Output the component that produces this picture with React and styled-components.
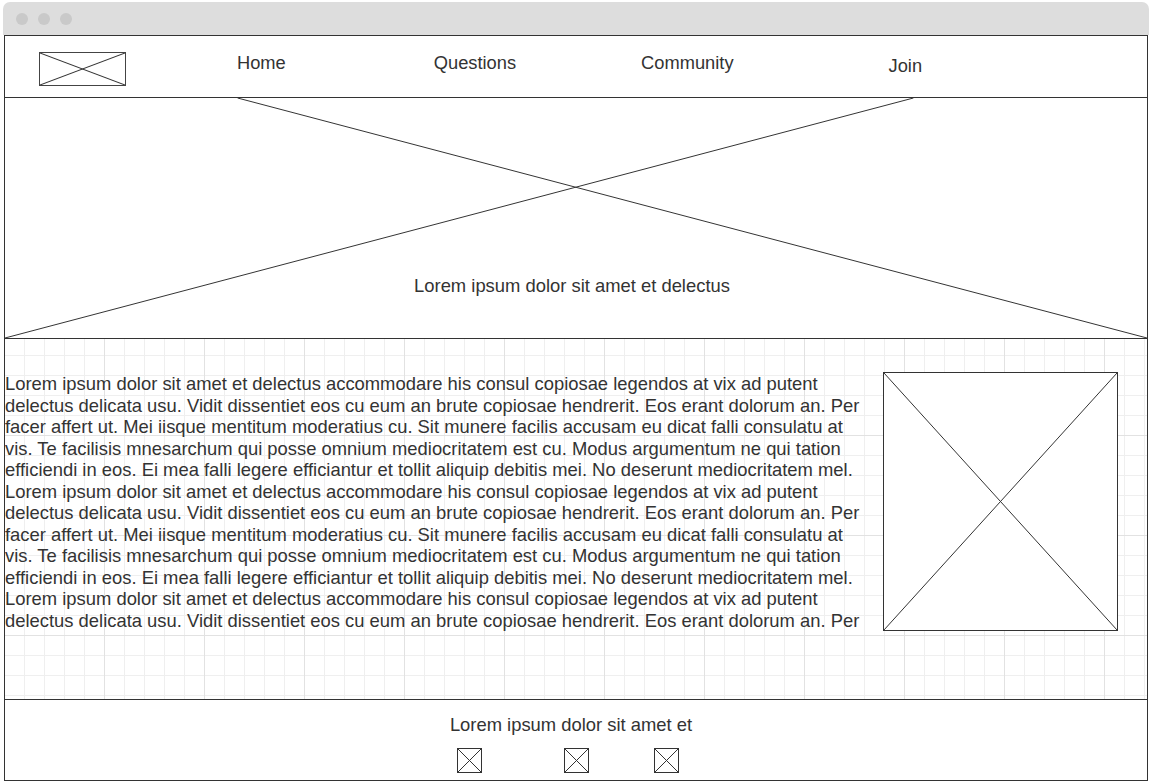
import React from "react";
import styled, { createGlobalStyle } from "styled-components";

const GlobalStyle = createGlobalStyle`
  html, body {
    margin: 0;
    padding: 0;
    background: #ffffff;
  }
  body {
    font-family: "Liberation Sans", Arial, sans-serif;
    color: #333333;
  }
`;

const paragraph = [
  "Lorem ipsum dolor sit amet et delectus accommodare his consul copiosae legendos at vix ad putent",
  "delectus delicata usu. Vidit dissentiet eos cu eum an brute copiosae hendrerit. Eos erant dolorum an. Per",
  "facer affert ut. Mei iisque mentitum moderatius cu. Sit munere facilis accusam eu dicat falli consulatu at",
  "vis. Te facilisis mnesarchum qui posse omnium mediocritatem est cu. Modus argumentum ne qui tation",
  "efficiendi in eos. Ei mea falli legere efficiantur et tollit aliquip debitis mei. No deserunt mediocritatem mel.",
];

const lines = [...paragraph, ...paragraph, paragraph[0], paragraph[1]];

const navItems = [
  { label: "Home", left: 111, drop: 0 },
  { label: "Questions", left: 148, drop: 0 },
  { label: "Community", left: 125, drop: 0 },
  { label: "Join", left: 155, drop: 5 },
];

const footerIcons = [0, 82, 65];

const Placeholder = () => (
  <svg width="100%" height="100%" preserveAspectRatio="none" viewBox="0 0 100 100">
    <line x1="0" y1="0" x2="100" y2="100" stroke="#333" strokeWidth="1" vectorEffect="non-scaling-stroke" />
    <line x1="100" y1="0" x2="0" y2="100" stroke="#333" strokeWidth="1" vectorEffect="non-scaling-stroke" />
  </svg>
);

const App = () => {
  return (
    <>
      <GlobalStyle />
      <Window>
        <TitleBar>
          <Dot />
          <Dot />
          <Dot />
        </TitleBar>
        <Frame>
          <Header>
            <Logo>
              <Placeholder />
            </Logo>
            <Nav>
              {navItems.map((item) => (
                <NavItem key={item.label} $left={item.left} $drop={item.drop}>
                  {item.label}
                </NavItem>
              ))}
            </Nav>
          </Header>
          <Hero>
            <HeroLines viewBox="0 0 1144 241" preserveAspectRatio="none">
              <line x1="233" y1="0" x2="1144" y2="241" stroke="#333" strokeWidth="1" />
              <line x1="910" y1="0" x2="0" y2="241" stroke="#333" strokeWidth="1" />
            </HeroLines>
            <HeroText>Lorem ipsum dolor sit amet et delectus</HeroText>
          </Hero>
          <Main>
            <Article>
              {lines.map((line, i) => (
                <Line key={i}>{line}</Line>
              ))}
            </Article>
            <ImageBox>
              <Placeholder />
            </ImageBox>
          </Main>
          <Footer>
            <FooterText>Lorem ipsum dolor sit amet et</FooterText>
            <IconRow>
              {footerIcons.map((gap, i) => (
                <SmallIcon key={i} $gap={gap}>
                  <Placeholder />
                </SmallIcon>
              ))}
            </IconRow>
          </Footer>
        </Frame>
      </Window>
    </>
  );
};

export default App;

const Window = styled.div`
  width: 1146px;
  margin: 2px 0 0 3px;
`;

const TitleBar = styled.div`
  height: 33px;
  background: #dddddd;
  border-radius: 7px 7px 0 0;
  display: flex;
  align-items: center;
  gap: 10px;
  padding-left: 13px;
  box-sizing: border-box;
`;

const Dot = styled.span`
  width: 12px;
  height: 12px;
  border-radius: 50%;
  background: #c9c9c9;
`;

const Frame = styled.div`
  margin: 0 1px 0 1px;
  border: 1px solid #333333;
`;

const Header = styled.header`
  height: 61px;
  display: flex;
  align-items: center;
  padding-left: 34px;
  border-bottom: 1px solid #333333;
`;

const Logo = styled.div`
  width: 85px;
  height: 32px;
  border: 1px solid #444444;
  margin-top: 4px;
  display: flex;
  flex-shrink: 0;
`;

const Nav = styled.nav`
  display: flex;
  align-items: center;
`;

const NavItem = styled.a`
  font-size: 18.3px;
  color: #333333;
  margin-left: ${({ $left }) => $left}px;
  padding-top: ${({ $drop }) => $drop}px;
  margin-top: -7px;
  cursor: pointer;
`;

const Hero = styled.section`
  position: relative;
  height: 241px;
  border-bottom: 1px solid #333333;
  display: flex;
  align-items: flex-end;
  justify-content: center;
  padding-bottom: 41px;
  box-sizing: border-box;
`;

const HeroLines = styled.svg`
  position: absolute;
  inset: 0;
  width: 100%;
  height: 100%;
`;

const HeroText = styled.div`
  position: relative;
  font-size: 18.4px;
  margin-right: 8px;
`;

const Main = styled.main`
  height: 360px;
  box-sizing: border-box;
  display: flex;
  align-items: flex-start;
  padding: 33px 30px 0 0;
  background-color: #ffffff;
  background-image:
    linear-gradient(to right, #e2e2e2 1px, transparent 1px),
    linear-gradient(to bottom, #e2e2e2 1px, transparent 1px),
    linear-gradient(to right, #efefef 1px, transparent 1px),
    linear-gradient(to bottom, #efefef 1px, transparent 1px);
  background-size: 100px 100px, 100px 100px, 20px 20px, 20px 20px;
  background-position: 99px 96px, 99px 96px, 19px 16px, 19px 16px;
`;

const Article = styled.div`
  width: 860px;
  flex-shrink: 0;
  margin-top: 1px;
  font-size: 18.4px;
  line-height: 21.5px;
  color: #333333;
`;

const Line = styled.div`
  white-space: nowrap;
`;

const ImageBox = styled.div`
  width: 233px;
  height: 257px;
  flex-shrink: 0;
  margin-left: 18px;
  border: 1px solid #333333;
  background: #ffffff;
  display: flex;
`;

const Footer = styled.footer`
  height: 81px;
  border-top: 1px solid #333333;
  background: #ffffff;
  display: flex;
  flex-direction: column;
  align-items: center;
  padding-top: 14px;
  box-sizing: border-box;
`;

const FooterText = styled.div`
  font-size: 18.4px;
  margin-right: 10px;
`;

const IconRow = styled.div`
  display: flex;
  margin-top: 12px;
  margin-right: 16px;
`;

const SmallIcon = styled.div`
  width: 23px;
  height: 23px;
  border: 1px solid #333333;
  margin-left: ${({ $gap }) => $gap}px;
  display: flex;
`;
